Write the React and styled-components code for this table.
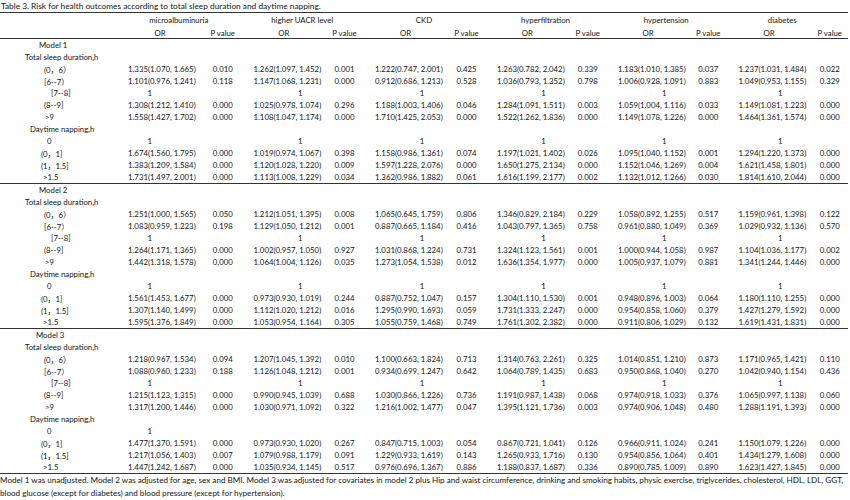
import React from 'react';
import styled, { createGlobalStyle } from 'styled-components';

const GlobalStyle = createGlobalStyle`
  html, body {
    margin: 0;
    padding: 0;
    background: #fff;
  }
  body {
    font-family: Lato, "Noto Sans CJK SC", sans-serif;
    color: #141414;
    overflow: hidden;
  }
`;

// label + 6 x (OR, P value)
const COLS = '128px 64px 61.5px 60.5px 61px 61px 61px 60.5px 60.5px 60px 60.5px 61px 50.5px';

const groups = ['microalbuminuria', 'higher UACR level', 'CKD', 'hyperfiltration', 'hypertension', 'diabetes'];

const r = (s) =>
  s.split(' | ').flatMap((x) => {
    const i = x.lastIndexOf(' ');
    return [x.slice(0, i), x.slice(i + 1)];
  });

const sleepLabels = [
  ['(0，6）', 44],
  ['[6--7）', 44],
  ['[7--8]', 51],
  ['(8--9]', 44],
  ['>9', 45],
];
const napLabels = [
  ['0', 47],
  ['(0，1]', 41],
  ['(1，1.5]', 41],
  ['>1.5', 43],
];

const models = [
  {
    name: 'Model 1',
    indent: 39,
    sleep: [
      r('1.335(1.070, 1.665) 0.010 | 1.262(1.097, 1.452) 0.001 | 1.222(0.747, 2.001) 0.425 | 1.263(0.782, 2.042) 0.339 | 1.183(1.010, 1.385) 0.037 | 1.237(1.031, 1.484) 0.022'),
      r('1.101(0.976, 1.241) 0.118 | 1.147(1.068, 1.231) 0.000 | 0.912(0.686, 1.213) 0.528 | 1.036(0.793, 1.352) 0.798 | 1.006(0.928, 1.091) 0.883 | 1.049(0.953, 1.155) 0.329'),
      'ref',
      r('1.308(1.212, 1.410) 0.000 | 1.025(0.978, 1.074) 0.296 | 1.188(1.003, 1.406) 0.046 | 1.284(1.091, 1.511) 0.003 | 1.059(1.004, 1.116) 0.033 | 1.149(1.081, 1.223) 0.000'),
      r('1.558(1.427, 1.702) 0.000 | 1.108(1.047, 1.174) 0.000 | 1.710(1.425, 2.053) 0.000 | 1.522(1.262, 1.836) 0.000 | 1.149(1.078, 1.226) 0.000 | 1.464(1.361, 1.574) 0.000'),
    ],
    nap: [
      'ref',
      r('1.674(1.560, 1.795) 0.000 | 1.019(0.974, 1.067) 0.398 | 1.158(0.986, 1.361) 0.074 | 1.197(1.021, 1.402) 0.026 | 1.095(1.040, 1.152) 0.001 | 1.294(1.220, 1.373) 0.000'),
      r('1.383(1.209, 1.584) 0.000 | 1.120(1.028, 1.220) 0.009 | 1.597(1.228, 2.076) 0.000 | 1.650(1.275, 2.134) 0.000 | 1.152(1.046, 1.269) 0.004 | 1.621(1.458, 1.801) 0.000'),
      r('1.731(1.497, 2.001) 0.000 | 1.113(1.008, 1.229) 0.034 | 1.362(0.986, 1.882) 0.061 | 1.616(1.199, 2.177) 0.002 | 1.132(1.012, 1.266) 0.030 | 1.814(1.610, 2.044) 0.000'),
    ],
  },
  {
    name: 'Model 2',
    indent: 39,
    sleep: [
      r('1.251(1.000, 1.565) 0.050 | 1.212(1.051, 1.395) 0.008 | 1.065(0.645, 1.759) 0.806 | 1.346(0.829, 2.184) 0.229 | 1.058(0.892, 1.255) 0.517 | 1.159(0.961, 1.398) 0.122'),
      r('1.083(0.959, 1.223) 0.198 | 1.129(1.050, 1.212) 0.001 | 0.887(0.665, 1.184) 0.416 | 1.043(0.797, 1.365) 0.758 | 0.961(0.880, 1.049) 0.369 | 1.029(0.932, 1.136) 0.570'),
      'ref',
      r('1.264(1.171, 1.365) 0.000 | 1.002(0.957, 1.050) 0.927 | 1.031(0.868, 1.224) 0.731 | 1.324(1.123, 1.561) 0.001 | 1.000(0.944, 1.058) 0.987 | 1.104(1.036, 1.177) 0.002'),
      r('1.442(1.318, 1.578) 0.000 | 1.064(1.004, 1.126) 0.035 | 1.273(1.054, 1.538) 0.012 | 1.636(1.354, 1.977) 0.000 | 1.005(0.937, 1.079) 0.881 | 1.341(1.244, 1.446) 0.000'),
    ],
    nap: [
      'ref',
      r('1.561(1.453, 1.677) 0.000 | 0.973(0.930, 1.019) 0.244 | 0.887(0.752, 1.047) 0.157 | 1.304(1.110, 1.530) 0.001 | 0.948(0.896, 1.003) 0.064 | 1.180(1.110, 1.255) 0.000'),
      r('1.307(1.140, 1.499) 0.000 | 1.112(1.020, 1.212) 0.016 | 1.295(0.990, 1.693) 0.059 | 1.731(1.333, 2.247) 0.000 | 0.954(0.858, 1.060) 0.379 | 1.427(1.279, 1.592) 0.000'),
      r('1.595(1.376, 1.849) 0.000 | 1.053(0.954, 1.164) 0.305 | 1.055(0.759, 1.468) 0.749 | 1.761(1.302, 2.382) 0.000 | 0.911(0.806, 1.029) 0.132 | 1.619(1.431, 1.831) 0.000'),
    ],
  },
  {
    name: 'Model 3',
    indent: 36,
    sleep: [
      r('1.218(0.967, 1.534) 0.094 | 1.207(1.045, 1.392) 0.010 | 1.100(0.663, 1.824) 0.713 | 1.314(0.763, 2.261) 0.325 | 1.014(0.851, 1.210) 0.873 | 1.171(0.965, 1.421) 0.110'),
      r('1.088(0.960, 1.233) 0.188 | 1.126(1.048, 1.212) 0.001 | 0.934(0.699, 1.247) 0.642 | 1.064(0.789, 1.435) 0.683 | 0.950(0.868, 1.040) 0.270 | 1.042(0.940, 1.154) 0.436'),
      'ref',
      r('1.215(1.123, 1.315) 0.000 | 0.990(0.945, 1.039) 0.688 | 1.030(0.866, 1.226) 0.736 | 1.191(0.987, 1.438) 0.068 | 0.974(0.918, 1.033) 0.376 | 1.065(0.997, 1.138) 0.060'),
      r('1.317(1.200, 1.446) 0.000 | 1.030(0.971, 1.092) 0.322 | 1.216(1.002, 1.477) 0.047 | 1.395(1.121, 1.736) 0.003 | 0.974(0.906, 1.048) 0.480 | 1.288(1.191, 1.393) 0.000'),
    ],
    nap: [
      'ref1',
      r('1.477(1.370, 1.591) 0.000 | 0.973(0.930, 1.020) 0.267 | 0.847(0.715, 1.003) 0.054 | 0.867(0.721, 1.041) 0.126 | 0.966(0.911, 1.024) 0.241 | 1.150(1.079, 1.226) 0.000'),
      r('1.217(1.056, 1.403) 0.007 | 1.079(0.988, 1.179) 0.091 | 1.229(0.933, 1.619) 0.143 | 1.265(0.933, 1.716) 0.130 | 0.954(0.856, 1.064) 0.401 | 1.434(1.279, 1.608) 0.000'),
      r('1.447(1.242, 1.687) 0.000 | 1.035(0.934, 1.145) 0.517 | 0.976(0.696, 1.367) 0.886 | 1.188(0.837, 1.687) 0.336 | 0.890(0.785, 1.009) 0.890 | 1.623(1.427, 1.845) 0.000'),
    ],
  },
];

const Page = styled.div`
  width: 850px;
  height: 500px;
`;

const Caption = styled.div`
  height: 12px;
  line-height: 13px;
  font-size: 8.3px;
  padding-left: 1px;
  white-space: nowrap;
`;

const Table = styled.div`
  width: 848px;
  border-top: 1px solid #333;
`;

const HeadRow = styled.div`
  display: grid;
  grid-template-columns: ${COLS};
  height: ${(p) => p.$h}px;
  align-items: center;
  font-size: 7.8px;
  white-space: nowrap;
  ${(p) => p.$rule && 'border-bottom: 1px solid #333;'}
`;

const GroupTitle = styled.div`
  grid-column: span 2;
  text-align: center;
  padding-right: 24px;
`;

const Section = styled.div`
  border-bottom: 1px solid #333;
`;

const Row = styled.div`
  display: grid;
  grid-template-columns: ${COLS};
  height: 12px;
  align-items: center;
  font-size: 7.8px;
  white-space: nowrap;
`;

const Label = styled.div`
  padding-left: ${(p) => p.$indent}px;
`;

const Cell = styled.div`
  text-align: center;
  padding-left: ${(p) => (p.$last ? 10 : 0)}px;
`;

const RefCell = styled.div`
  grid-column: span 2;
  text-align: center;
  padding-right: ${(p) => p.$shift * 2}px;
`;

const Note = styled.p`
  margin: 0;
  font-size: 8.1px;
  line-height: 13px;
`;

const Values = ({ vals }) => {
  if (vals === 'ref' || vals === 'ref1') {
    return groups.map((g, i) =>
      vals === 'ref1' && i > 0 ? (
        <RefCell key={g} $shift={0} />
      ) : (
        <RefCell key={g} $shift={i === 0 ? 41 : 14}>
          1
        </RefCell>
      )
    );
  }
  return vals.map((v, i) => (
    <Cell key={i} $last={i === 11}>
      {v}
    </Cell>
  ));
};

const ModelBlock = ({ model }) => (
  <Section>
    <Row>
      <Label $indent={model.indent}>{model.name}</Label>
    </Row>
    <Row>
      <Label $indent={25}>Total sleep duration,h</Label>
    </Row>
    {model.sleep.map((vals, i) => (
      <Row key={'s' + i}>
        <Label $indent={sleepLabels[i][1]}>{sleepLabels[i][0]}</Label>
        <Values vals={vals} />
      </Row>
    ))}
    <Row>
      <Label $indent={30}>Daytime napping,h</Label>
    </Row>
    {model.nap.map((vals, i) => (
      <Row key={'n' + i}>
        <Label $indent={napLabels[i][1]}>{napLabels[i][0]}</Label>
        <Values vals={vals} />
      </Row>
    ))}
  </Section>
);

export default function App() {
  return (
    <Page>
      <GlobalStyle />
      <Caption>Table 3. Risk for health outcomes according to total sleep duration and daytime napping.</Caption>
      <Table>
        <HeadRow $h={14}>
          <div />
          {groups.map((g) => (
            <GroupTitle key={g}>{g}</GroupTitle>
          ))}
        </HeadRow>
        <HeadRow $h={11} $rule>
          <div />
          {groups.map((g, i) => (
            <React.Fragment key={g}>
              <Cell>OR</Cell>
              <Cell $last={i === 5}>P value</Cell>
            </React.Fragment>
          ))}
        </HeadRow>
        {models.map((m) => (
          <ModelBlock key={m.name} model={m} />
        ))}
      </Table>
      <Note>
        Model 1 was unadjusted. Model 2 was adjusted for age, sex and BMI. Model 3 was adjusted for covariates in model 2
        plus Hip and waist circumference, drinking and smoking habits, physic exercise, triglycerides, cholesterol, HDL,
        LDL, GGT, blood glucose (except for diabetes) and blood pressure (except for hypertension).
      </Note>
    </Page>
  );
}
